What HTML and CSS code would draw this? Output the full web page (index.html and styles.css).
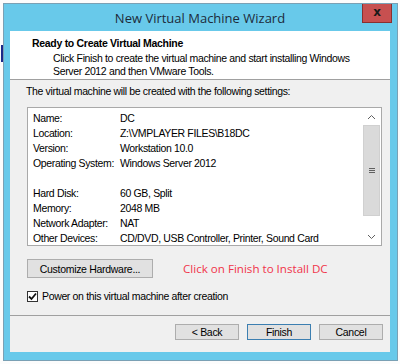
FILE: index.html
```html
<!DOCTYPE html>
<html lang="en">
<head>
  <meta charset="UTF-8" />
  <title>New Virtual Machine Wizard</title>
  <link rel="stylesheet" href="styles.css">
</head>
<body>

  <div class="side-mark"></div>

  <div class="window">
    <div class="titlebar">New Virtual Machine Wizard</div>
    <div class="close-btn">x</div>

    <div class="content">
      <div class="header">
        <div class="header-title">Ready to Create Virtual Machine</div>
        <div class="header-desc">Click Finish to create the virtual machine and start installing Windows Server 2012 and then VMware Tools.</div>
      </div>

      <div class="body">
        <div class="intro">The virtual machine will be created with the following settings:</div>

        <div class="listbox">
          <div class="rows">
            <div class="row"><span class="label">Name:</span><span>DC</span></div>
            <div class="row"><span class="label">Location:</span><span>Z:\VMPLAYER FILES\B18DC</span></div>
            <div class="row"><span class="label">Version:</span><span>Workstation 10.0</span></div>
            <div class="row"><span class="label">Operating System:</span><span>Windows Server 2012</span></div>
            <div class="row"></div>
            <div class="row"><span class="label">Hard Disk:</span><span>60 GB, Split</span></div>
            <div class="row"><span class="label">Memory:</span><span>2048 MB</span></div>
            <div class="row"><span class="label">Network Adapter:</span><span>NAT</span></div>
            <div class="row"><span class="label">Other Devices:</span><span>CD/DVD, USB Controller, Printer, Sound Card</span></div>
          </div>
          <div class="scrollbar">
            <div class="sb-arrow">
              <svg width="9" height="6" viewBox="0 0 9 6"><path d="M1 5 L4.5 1.5 L8 5" fill="none" stroke="#606060" stroke-width="1"/></svg>
            </div>
            <div class="sb-thumb"><span class="grip"></span></div>
            <div class="sb-track"></div>
            <div class="sb-arrow">
              <svg width="9" height="6" viewBox="0 0 9 6"><path d="M1 1 L4.5 4.5 L8 1" fill="none" stroke="#606060" stroke-width="1"/></svg>
            </div>
          </div>
        </div>

        <div class="custom-row">
          <button class="btn btn-custom">Customize Hardware...</button>
          <span class="note">Click on Finish to Install DC</span>
        </div>

        <label class="check-row">
          <span class="checkbox">
            <svg width="9" height="9" viewBox="0 0 9 9"><path d="M1 4.5 L3.5 7 L8 1.5" fill="none" stroke="#111" stroke-width="1.8"/></svg>
          </span>
          Power on this virtual machine after creation
        </label>
      </div>

      <div class="footer">
        <button class="btn">&lt; Back</button>
        <button class="btn btn-default">Finish</button>
        <button class="btn">Cancel</button>
      </div>
    </div>
  </div>

</body>
</html>
```

FILE: styles.css
```css
body {
  margin: 0;
  background: #fcfcfc;
  font-family: 'Liberation Sans', Arial, sans-serif;
  font-size: 10.5px;
  letter-spacing: -0.35px;
  color: #000;
  width: 400px;
  height: 364px;
  overflow: hidden;
}
.side-mark {
  position: absolute;
  left: 1px;
  top: 45px;
  width: 2px;
  height: 17px;
  background: #1b2a8a;
}
.window {
  position: relative;
  margin: 3px 0 0 3px;
  width: 395px;
  height: 358px;
  box-sizing: border-box;
  border: 1px solid #7aa0b4;
  background: #68c9ea;
  padding: 0 7px 8px 6px;
  display: flex;
  flex-direction: column;
}
.titlebar {
  height: 27px;
  display: flex;
  align-items: center;
  justify-content: center;
  font-family: 'Open Sans', 'Noto Sans', sans-serif;
  font-size: 13px;
  letter-spacing: 0;
  color: #1d2b3a;
  padding-top: 1px;
  box-sizing: border-box;
}
.close-btn {
  position: absolute;
  top: 0;
  right: 5px;
  width: 30px;
  height: 19px;
  box-sizing: border-box;
  background: #c75050;
  border: 1px solid #8a3030;
  border-top: none;
  color: #1a1a1a;
  font-family: 'DejaVu Sans', sans-serif;
  font-weight: bold;
  font-size: 12px;
  letter-spacing: 0;
  line-height: 16px;
  text-align: center;
}
.content {
  flex: 1;
  background: #f0f0f0;
  display: flex;
  flex-direction: column;
}
.header {
  background: #fff;
  height: 42px;
  border-bottom: 1px solid #a0a0a0;
  padding: 6px 0 0 22px;
}
.header-title {
  font-weight: bold;
  line-height: 13px;
  letter-spacing: -0.3px;
}
.header-desc {
  margin: 2px 0 0 21px;
  width: 300px;
  line-height: 13px;
}
.body {
  padding: 5px 8px 0 17px;
  flex: 1;
}
.intro {
  margin-left: -1px;
  line-height: 13px;
}
.listbox {
  margin-top: 9px;
  width: 355px;
  height: 139px;
  box-sizing: border-box;
  border: 1px solid #a9a9a9;
  background: #fff;
  display: flex;
  justify-content: space-between;
}
.rows {
  padding: 3px 0 0 5px;
}
.row {
  display: flex;
  height: 15px;
  line-height: 15px;
  white-space: nowrap;
}
.label {
  width: 87px;
  flex: none;
}
.scrollbar {
  width: 17px;
  margin-right: 1px;
  display: flex;
  flex-direction: column;
}
.sb-arrow {
  height: 17px;
  display: flex;
  align-items: center;
  justify-content: center;
  background: #fff;
}
.sb-thumb {
  height: 91px;
  background: #dadada;
  border: 1px solid #d0d0d0;
  box-sizing: border-box;
  display: flex;
  align-items: center;
  justify-content: center;
}
.grip {
  width: 6px;
  height: 5px;
  border-top: 1px solid #606060;
  border-bottom: 1px solid #606060;
  box-sizing: border-box;
  background: linear-gradient(#606060, #606060) center / 6px 1px no-repeat;
}
.sb-track {
  flex: 1;
  background: #fff;
}
.custom-row {
  margin-top: 13px;
  display: flex;
  align-items: center;
}
.btn {
  font-family: 'Liberation Sans', Arial, sans-serif;
  font-size: 10.5px;
  letter-spacing: -0.3px;
  color: #000;
  background: #e1e1e1;
  border: 1px solid #adadad;
  padding: 0;
  margin: 0;
}
.btn-custom {
  width: 126px;
  height: 19px;
}
.note {
  margin-left: 30px;
  color: #f0344a;
  font-family: 'Open Sans', 'Noto Sans', sans-serif;
  font-size: 11.6px;
  letter-spacing: 0;
}
.check-row {
  margin-top: 12px;
  display: flex;
  align-items: center;
  gap: 4px;
  line-height: 13px;
}
.checkbox {
  width: 11px;
  height: 11px;
  box-sizing: border-box;
  border: 1px solid #333;
  background: #fff;
  display: flex;
  align-items: center;
  justify-content: center;
}
.footer {
  height: 28px;
  border-top: 1px solid #a0a0a0;
  display: flex;
  justify-content: flex-end;
  align-items: flex-start;
  gap: 8px;
  padding: 8px 7px 0 0;
}
.footer .btn {
  width: 64px;
  height: 16px;
}
.btn-default {
  border-color: #3c7fb1;
}
```
